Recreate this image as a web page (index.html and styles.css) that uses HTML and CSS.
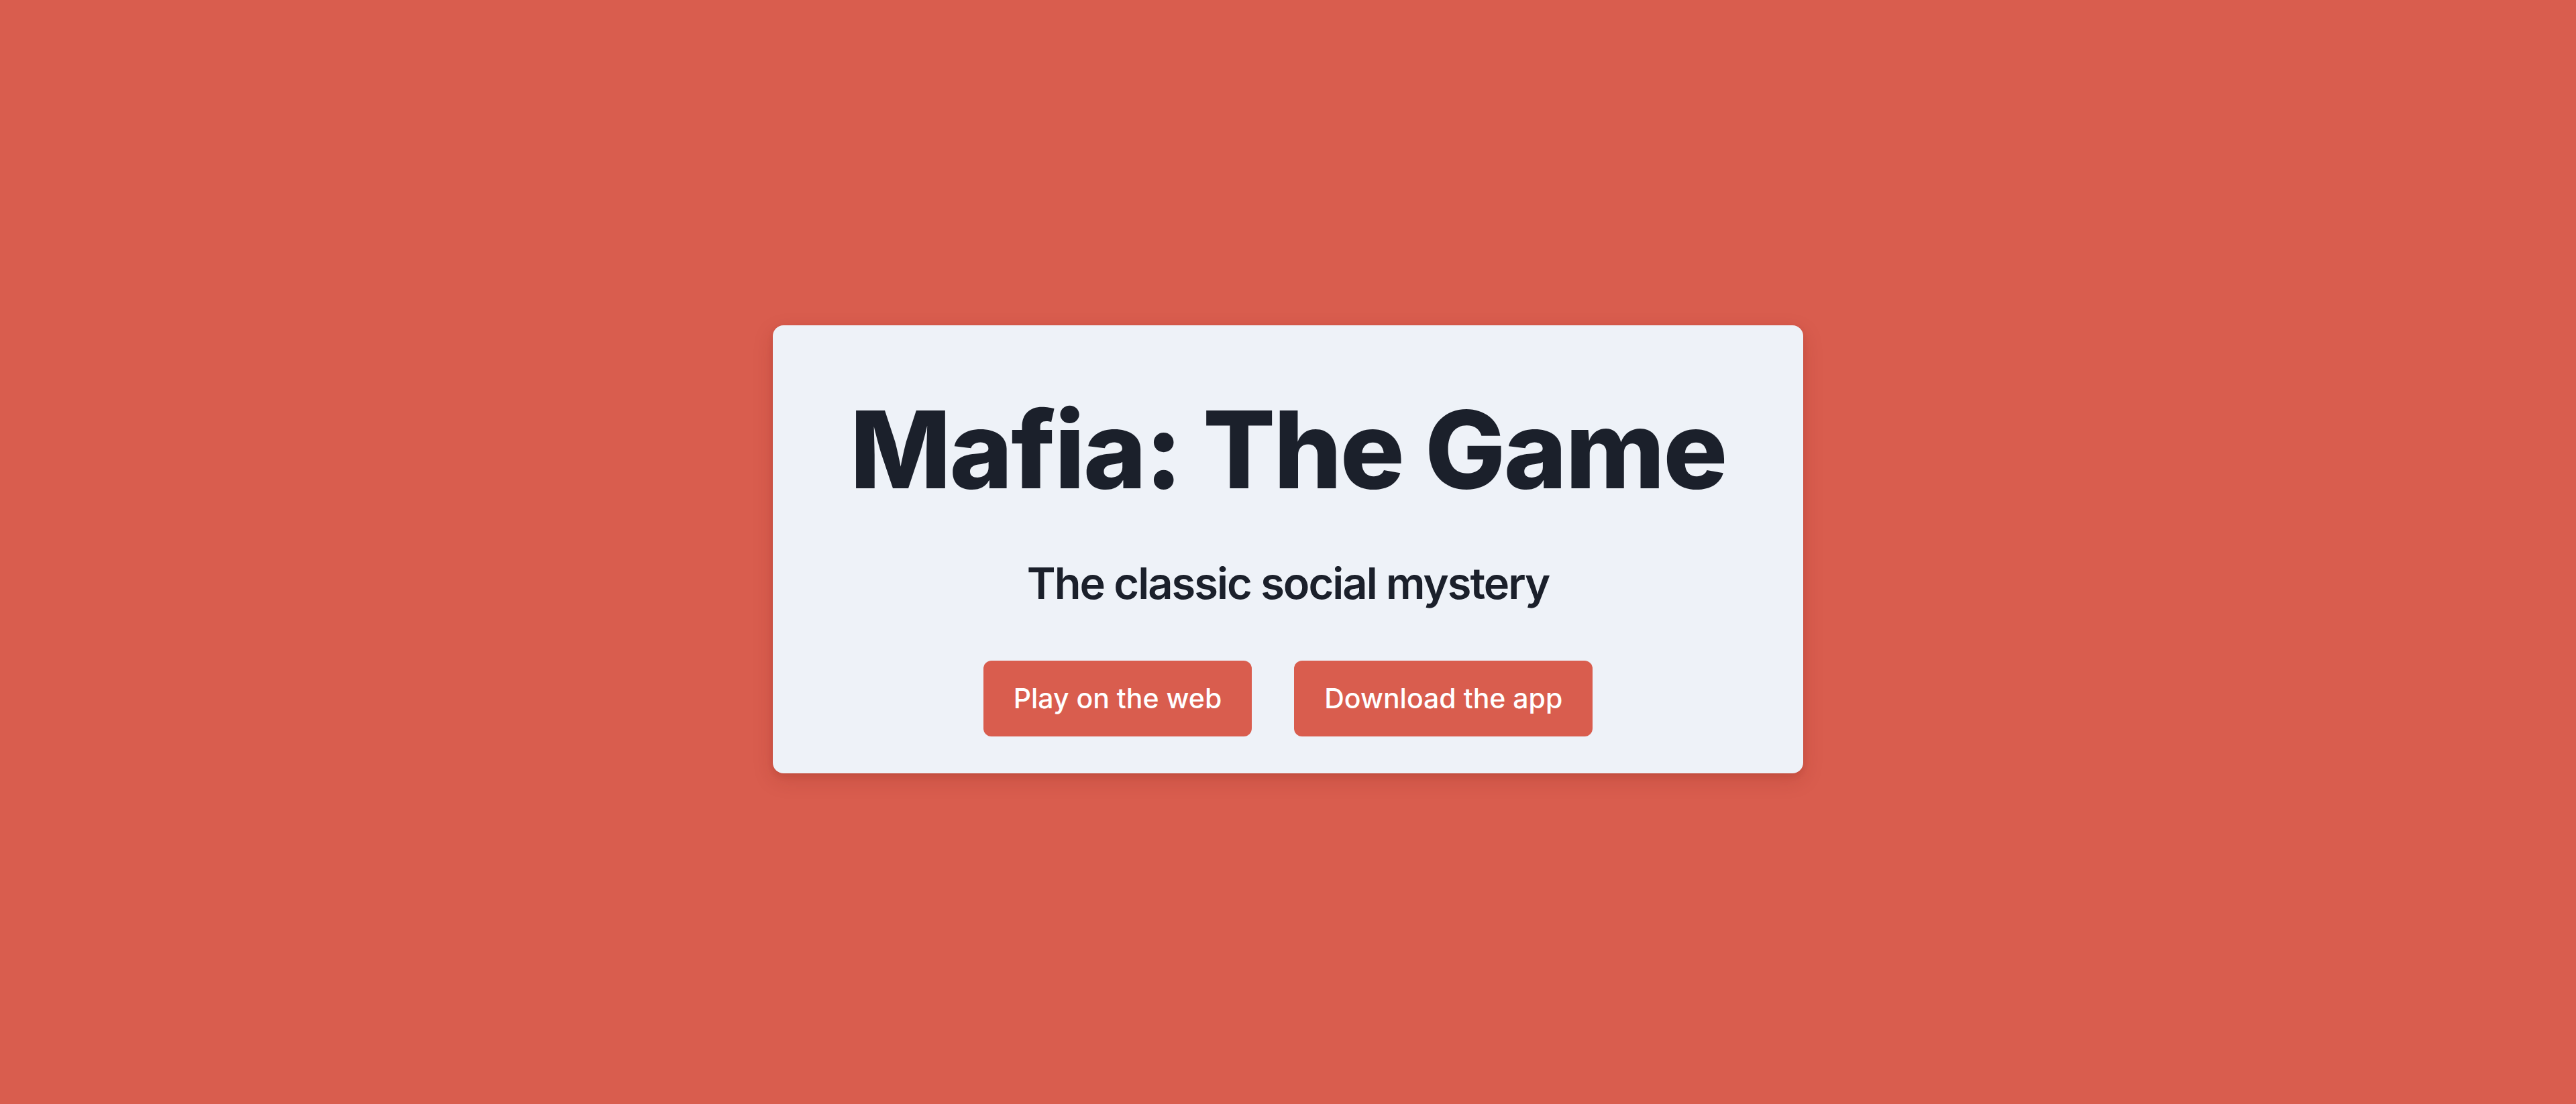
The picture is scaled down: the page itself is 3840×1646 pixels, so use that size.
FILE: index.html
```html
<!DOCTYPE html>
<html lang="en">
<head>
<meta charset="utf-8">
<title>Mafia: The Game</title>
<link rel="stylesheet" href="styles.css">
</head>
<body>
<main class="page">
  <section class="card">
    <h1 class="title">Mafia: The Game</h1>
    <p class="subtitle">The classic social mystery</p>
    <div class="actions">
      <a class="btn" href="#">Play on the web</a>
      <a class="btn" href="#">Download the app</a>
    </div>
  </section>
</main>
</body>
</html>
```
FILE: styles.css
```css
html, body {
  margin: 0;
  padding: 0;
  height: 100%;
}
body {
  background: #d95d4e;
  font-family: Inter, "Noto Sans", "Liberation Sans", sans-serif;
}
.page {
  height: 100%;
  box-sizing: border-box;
  padding-bottom: 8px;
  display: flex;
  align-items: center;
  justify-content: center;
}
.card {
  width: 1536px;
  box-sizing: border-box;
  background: #eef2f8;
  border-radius: 16px;
  box-shadow: 0 10px 30px rgba(120, 30, 20, 0.18), 0 4px 8px rgba(120, 30, 20, 0.12);
  padding: 105px 0 55px;
  display: flex;
  flex-direction: column;
  align-items: center;
}
.title {
  margin: 0;
  font-size: 160px;
  line-height: 1;
  font-weight: 800;
  color: #1b202b;
  letter-spacing: -2.5px;
}
.subtitle {
  margin: 87px 0 0;
  font-size: 65px;
  line-height: 1;
  font-weight: 600;
  color: #1b202b;
  letter-spacing: -2px;
}
.actions {
  display: flex;
  gap: 63px;
  margin-top: 83px;
}
.btn {
  display: block;
  background: #d95d4e;
  color: #fff;
  text-decoration: none;
  font-size: 41px;
  font-weight: 500;
  line-height: 71px;
  padding: 21px 45px;
  border-radius: 12px;
}
```
